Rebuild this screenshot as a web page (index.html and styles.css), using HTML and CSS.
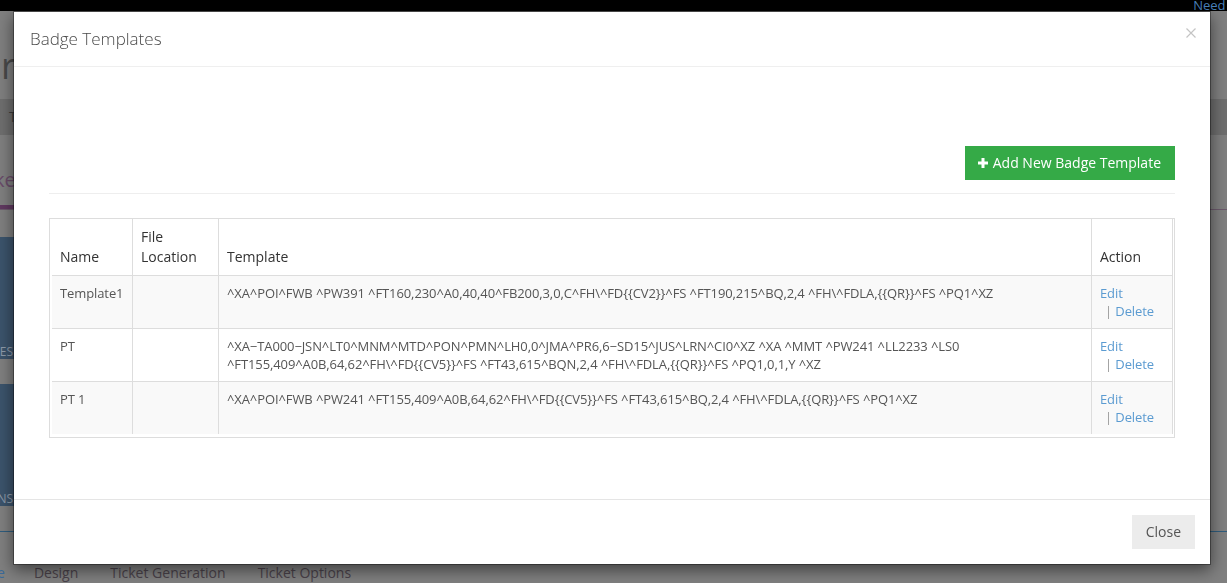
FILE: index.html
```html
<!DOCTYPE html>
<html lang="en">
<head>
  <meta charset="UTF-8">
  <meta name="viewport" content="width=device-width, initial-scale=1">
  <title>Badge Templates</title>
  <link rel="stylesheet" href="styles.css">
</head>
<body>
  <!-- Page behind the dialog (already dimmed by the backdrop) -->
  <div class="page">
    <div class="topbar">
      <a href="#" class="help-link">Need help?</a>
    </div>
    <div class="page-head">
      <h1 class="page-title">r</h1>
    </div>
    <div class="page-bar">T</div>
    <div class="tabs">
      <span class="tab active">ke</span>
    </div>
    <div class="stats">
      <div class="stat-panel"><span class="stat-label">LES</span></div>
      <div class="stat-panel"><span class="stat-label">NS</span></div>
    </div>
    <div class="sub-tabs">
      <span class="sub-tab active">e</span>
      <span class="sub-tab">Design</span>
      <span class="sub-tab">Ticket Generation</span>
      <span class="sub-tab">Ticket Options</span>
    </div>
  </div>

  <!-- Badge Templates dialog -->
  <div class="modal">
    <div class="modal-header">
      <h4 class="modal-title">Badge Templates</h4>
      <button class="close-btn" aria-label="Close">
        <svg width="10" height="10" viewBox="0 0 10 10"><path d="M0.5 0.5L9.5 9.5M9.5 0.5L0.5 9.5" stroke="#c4c4c4" stroke-width="1.2" fill="none"/></svg>
      </button>
    </div>

    <div class="modal-body">
      <div class="toolbar">
        <button class="btn btn-green">
          <svg width="10" height="10" viewBox="0 0 10 10"><path d="M3.5 0h3v3.5H10v3H6.5V10h-3V6.5H0v-3h3.5z" fill="#fff"/></svg>
          Add New Badge Template
        </button>
      </div>
      <hr class="divider">

      <div class="table-wrap">
        <table class="templates">
          <colgroup>
            <col class="col-name">
            <col class="col-file">
            <col>
            <col class="col-action">
          </colgroup>
          <thead>
            <tr>
              <th>Name</th>
              <th>File Location</th>
              <th>Template</th>
              <th>Action</th>
            </tr>
          </thead>
          <tbody>
            <tr>
              <td>Template1</td>
              <td></td>
              <td>^XA^POI^FWB ^PW391 ^FT160,230^A0,40,40^FB200,3,0,C^FH\^FD{{CV2}}^FS ^FT190,215^BQ,2,4 ^FH\^FDLA,{{QR}}^FS ^PQ1^XZ</td>
              <td><a href="#">Edit</a><br><span class="sep">|</span> <a href="#">Delete</a></td>
            </tr>
            <tr>
              <td>PT</td>
              <td></td>
              <td>^XA−TA000−JSN^LT0^MNM^MTD^PON^PMN^LH0,0^JMA^PR6,6−SD15^JUS^LRN^CI0^XZ ^XA ^MMT ^PW241 ^LL2233 ^LS0 ^FT155,409^A0B,64,62^FH\^FD{{CV5}}^FS ^FT43,615^BQN,2,4 ^FH\^FDLA,{{QR}}^FS ^PQ1,0,1,Y ^XZ</td>
              <td><a href="#">Edit</a><br><span class="sep">|</span> <a href="#">Delete</a></td>
            </tr>
            <tr>
              <td>PT 1</td>
              <td></td>
              <td>^XA^POI^FWB ^PW241 ^FT155,409^A0B,64,62^FH\^FD{{CV5}}^FS ^FT43,615^BQ,2,4 ^FH\^FDLA,{{QR}}^FS ^PQ1^XZ</td>
              <td><a href="#">Edit</a><br><span class="sep">|</span> <a href="#">Delete</a></td>
            </tr>
          </tbody>
        </table>
      </div>
    </div>

    <div class="modal-footer">
      <button class="btn btn-default">Close</button>
    </div>
  </div>
</body>
</html>
```
FILE: styles.css
```css
* {
  box-sizing: border-box;
}

body {
  margin: 0;
  height: 100vh;
  overflow: hidden;
  background: #808080;
  color: #555;
  font-family: 'Open Sans', sans-serif;
}

/* Page behind the dialog */
.topbar {
  height: 11px;
  background: #000;
  display: flex;
  justify-content: flex-end;
  overflow: hidden;
}

.help-link {
  font-size: 13px;
  line-height: 11px;
  color: #4a82bd;
  text-decoration: none;
  white-space: nowrap;
  margin-right: -34px;
}

.page-head {
  height: 88px;
  padding: 35px 0 0 1px;
}

.page-title {
  margin: 0;
  font-size: 36px;
  font-weight: 400;
  line-height: 40px;
  color: #4a4a4a;
}

.page-bar {
  height: 36px;
  padding-left: 9px;
  background: #6f6f6f;
  color: #3d3d3d;
  font-size: 14px;
  line-height: 36px;
}

.tabs {
  padding-top: 33px;
  border-bottom: 1px solid #6c5a6c;
  display: flex;
}

.tab {
  font-size: 20px;
  line-height: 24px;
  padding: 0 0 13px;
  margin-left: -6px;
  color: #6a4c6a;
  border-bottom: 4px solid #613a61;
}

.stats {
  padding-top: 27px;
  width: 220px;
  display: flex;
  flex-direction: column;
  gap: 25px;
}

.stat-panel {
  height: 122px;
  background: #3c546c;
  display: flex;
  align-items: flex-end;
  justify-content: flex-end;
  padding: 0 207px 0 0;
  overflow: hidden;
}

.stat-label {
  font-size: 12px;
  line-height: 14px;
  color: #8f9cab;
}

.sub-tabs {
  margin-top: 25px;
  border-top: 1px solid #2f5d7e;
  padding-top: 31px;
  display: flex;
  gap: 32px;
  font-size: 14px;
  line-height: 20px;
}

.sub-tab {
  color: #4a424a;
}

.sub-tab.active {
  color: #3a6a9a;
  margin-left: -3px;
  margin-right: -3px;
}

/* Dialog */
.modal {
  position: fixed;
  top: 11px;
  left: 13px;
  width: 1198px;
  background: #fff;
  background-clip: padding-box;
  border: 1px solid rgba(0, 0, 0, 0.35);
  box-shadow: 0 5px 15px rgba(0, 0, 0, 0.5);
}

.modal-header {
  display: flex;
  justify-content: space-between;
  align-items: flex-start;
  padding: 15px 14px 15px 16px;
  border-bottom: 1px solid #efefef;
}

.modal-title {
  margin: 0;
  font-size: 17px;
  font-weight: 300;
  line-height: 24px;
  color: #4a4a4a;
}

.close-btn {
  margin-top: 1px;
  padding: 0;
  border: 0;
  background: none;
  line-height: 0;
  cursor: pointer;
}

.modal-body {
  padding: 79px 35px 61px;
}

.toolbar {
  display: flex;
  justify-content: flex-end;
}

.btn {
  border: 0;
  font-family: inherit;
  font-size: 14px;
  line-height: 20px;
  cursor: pointer;
}

.btn-green {
  display: flex;
  align-items: center;
  gap: 5px;
  height: 34px;
  padding: 0 14px 0 13px;
  background: #35aa47;
  color: #fff;
}

.btn-default {
  padding: 7px 14px;
  background: #ececec;
  color: #555;
}

.divider {
  margin: 13px 0 24px;
  border: 0;
  border-top: 1px solid #eee;
}

.table-wrap {
  border: 1px solid #ddd;
  padding: 0 1px 3px 2px;
}

.templates {
  width: 100%;
  table-layout: fixed;
  border-collapse: separate;
  border-spacing: 0;
  border-right: 1px solid #ddd;
}

.col-name {
  width: 80px;
}

.col-file {
  width: 86px;
}

.col-action {
  width: 81px;
}

.templates th,
.templates td {
  padding: 8px;
  text-align: left;
  border-bottom: 1px solid #ddd;
  border-left: 1px solid #ddd;
}

.templates th:first-child,
.templates td:first-child {
  border-left: 0;
}

.templates tbody tr:last-child td {
  border-bottom: 0;
}

.templates th {
  vertical-align: bottom;
  font-size: 14px;
  font-weight: 400;
  line-height: 20px;
  color: #333;
}

.templates td {
  vertical-align: top;
  font-size: 13px;
  line-height: 18px;
  color: #555;
  letter-spacing: -0.1px;
}

.templates tbody tr:nth-child(odd) td {
  background: #f9f9f9;
}

.templates a {
  color: #5b9bd1;
  text-decoration: none;
}

.sep {
  padding-left: 5px;
  color: #999;
}

.modal-footer {
  display: flex;
  justify-content: flex-end;
  padding: 15px;
  border-top: 1px solid #e5e5e5;
}
```
